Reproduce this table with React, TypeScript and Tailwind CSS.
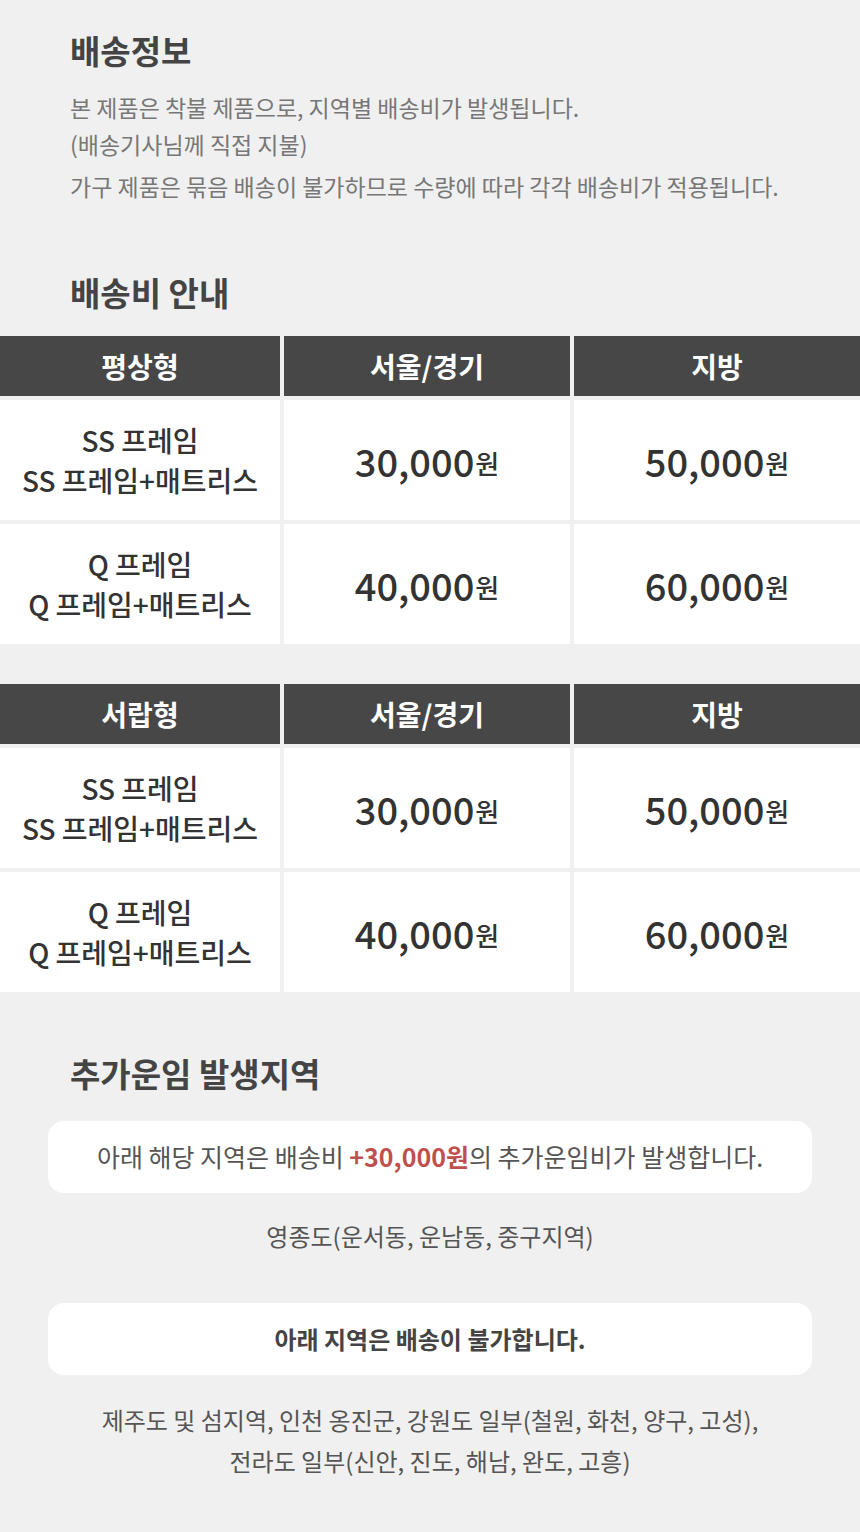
import React from 'react';

type Row = { name: string[]; metro: string; local: string };

const tables: { type: string; rows: Row[] }[] = [
  {
    type: '평상형',
    rows: [
      { name: ['SS 프레임', 'SS 프레임+매트리스'], metro: '30,000', local: '50,000' },
      { name: ['Q 프레임', 'Q 프레임+매트리스'], metro: '40,000', local: '60,000' }
    ]
  },
  {
    type: '서랍형',
    rows: [
      { name: ['SS 프레임', 'SS 프레임+매트리스'], metro: '30,000', local: '50,000' },
      { name: ['Q 프레임', 'Q 프레임+매트리스'], metro: '40,000', local: '60,000' }
    ]
  }
];

const Price: React.FC<{ value: string }> = ({ value }) => (
  <div className="flex h-[120px] items-center justify-center bg-white text-[#333]">
    <span className="text-[38px] font-medium">{value}</span>
    <span className="ml-[1px] mt-[4px] text-[26px] font-medium">원</span>
  </div>
);

const FeeTable: React.FC<{ type: string; rows: Row[] }> = ({ type, rows }) => (
  <div className="grid grid-cols-[280px_1fr_1fr] gap-[4px]">
    {[type, '서울/경기', '지방'].map((h) => (
      <div
        key={h}
        className="flex h-[60px] items-center justify-center bg-[#474747] text-[28px] font-semibold text-white"
      >
        {h}
      </div>
    ))}
    {rows.map((row, i) => (
      <React.Fragment key={i}>
        <div className="flex h-[120px] flex-col items-center justify-center bg-white text-[28px] font-medium leading-[40px] text-[#333]">
          {row.name.map((n) => (
            <span key={n}>{n}</span>
          ))}
        </div>
        <Price value={row.metro} />
        <Price value={row.local} />
      </React.Fragment>
    ))}
  </div>
);

const App: React.FC = () => {
  return (
    <div
      className="min-h-screen bg-[#f0f0f0] pb-[40px]"
      style={{ fontFamily: '"Noto Sans CJK KR", "Noto Sans", sans-serif' }}
    >
      <div className="px-[70px] pt-[30px]">
        <h2 className="text-[33px] font-bold leading-[40px] text-[#444]">배송정보</h2>
        <p className="mt-[19px] text-[23px] leading-[37px] text-[#777]">
          본 제품은 착불 제품으로, 지역별 배송비가 발생됩니다.
          <br />
          (배송기사님께 직접 지불)
        </p>
        <p className="mt-[5px] text-[23px] leading-[37px] text-[#777]">
          가구 제품은 묶음 배송이 불가하므로 수량에 따라 각각 배송비가 적용됩니다.
        </p>
        <h2 className="mt-[67px] text-[33px] font-bold leading-[40px] text-[#444]">배송비 안내</h2>
      </div>

      <div className="mt-[24px] flex flex-col gap-[40px]">
        {tables.map((t) => (
          <FeeTable key={t.type} type={t.type} rows={t.rows} />
        ))}
      </div>

      <div className="px-[70px]">
        <h2 className="mt-[61px] text-[33px] font-bold leading-[40px] text-[#444]">추가운임 발생지역</h2>
      </div>

      <div className="mx-[48px] mt-[28px] flex h-[72px] items-center justify-center rounded-[16px] bg-white text-[25px] text-[#555]">
        <span>
          아래 해당 지역은 배송비 <b className="font-bold text-[#c0504e]">+30,000원</b>의 추가운임비가 발생합니다.
        </span>
      </div>
      <p className="mt-[27px] text-center text-[24px] leading-[32px] text-[#555]">
        영종도(운서동, 운남동, 중구지역)
      </p>

      <div className="mx-[48px] mt-[51px] flex h-[72px] items-center justify-center rounded-[16px] bg-white text-[24px] font-bold text-[#444]">
        아래 지역은 배송이 불가합니다.
      </div>
      <p className="mt-[24px] text-center text-[24px] leading-[41px] text-[#555]">
        제주도 및 섬지역, 인천 옹진군, 강원도 일부(철원, 화천, 양구, 고성),
        <br />
        전라도 일부(신안, 진도, 해남, 완도, 고흥)
      </p>
    </div>
  );
};

export default App;
